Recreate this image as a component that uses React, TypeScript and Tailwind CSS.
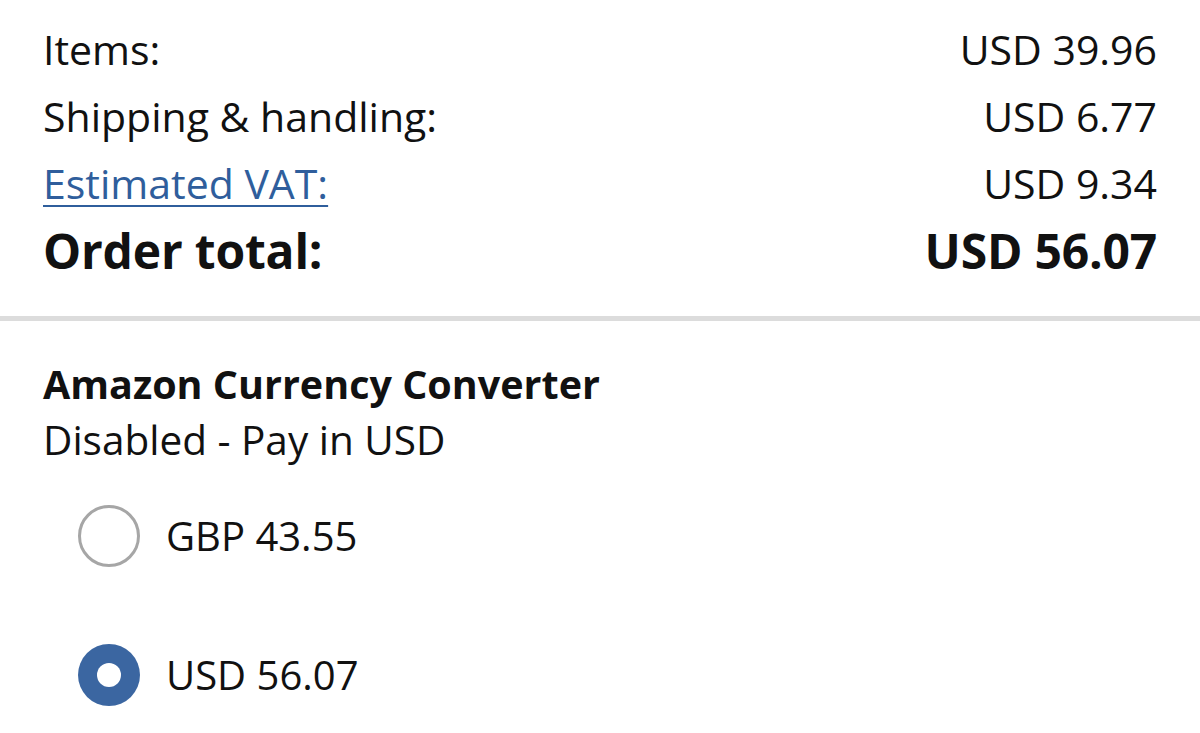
import React from 'react'

const rows = [
  { label: 'Items:', value: 'USD 39.96' },
  { label: 'Shipping & handling:', value: 'USD 6.77' },
  { label: 'Estimated VAT:', value: 'USD 9.34', link: true },
]

function Radio({ checked }: { checked?: boolean }) {
  if (checked) {
    return (
      <span className="flex h-[62px] w-[62px] items-center justify-center rounded-full bg-[#3b66a1]">
        <span className="h-[24px] w-[24px] rounded-full bg-white" />
      </span>
    )
  }
  return <span className="block h-[62px] w-[62px] rounded-full border-[3px] border-[#a6a6a6] bg-white" />
}

export default function App() {
  return (
    <div className="min-h-screen bg-white text-[#111] font-['Open_Sans',sans-serif]">
      <div className="px-[43px] pt-[16px]">
        {rows.map((r) => (
          <div key={r.label} className="flex items-center justify-between text-[41px] leading-[67px]">
            {r.link ? (
              <a href="#" className="text-[#2f5e9c] underline decoration-[2px] underline-offset-[6px]">
                {r.label}
              </a>
            ) : (
              <span>{r.label}</span>
            )}
            <span>{r.value}</span>
          </div>
        ))}
        <div className="flex items-center justify-between text-[48px] font-bold leading-[68px] tracking-[-0.2px]">
          <span>Order total:</span>
          <span>USD 56.07</span>
        </div>
      </div>

      <div className="mt-[31px] h-[5px] bg-[#dcdcdc]" />

      <div className="px-[43px] pt-[35px]">
        <h2 className="text-[39.5px] font-bold leading-[56px]">Amazon Currency Converter</h2>
        <p className="text-[40.5px] leading-[56px]">Disabled - Pay in USD</p>

        <div className="mt-[37px] flex flex-col gap-[77px] pl-[35px]">
          <label className="flex items-center gap-[26px] text-[40px]">
            <Radio />
            <span>GBP 43.55</span>
          </label>
          <label className="flex items-center gap-[26px] text-[40px]">
            <Radio checked />
            <span>USD 56.07</span>
          </label>
        </div>
      </div>
    </div>
  )
}
